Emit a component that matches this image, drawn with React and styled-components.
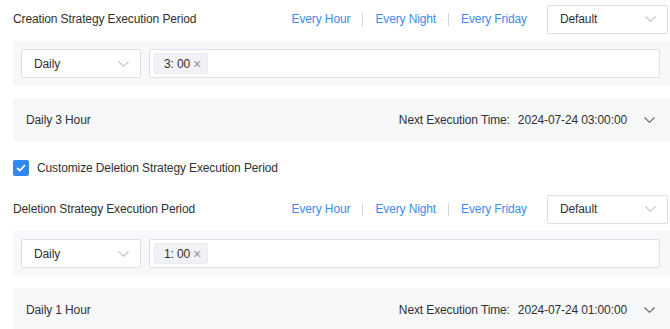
import React from "react";
import styled, { createGlobalStyle } from "styled-components";

const GlobalStyle = createGlobalStyle`
  body {
    margin: 0;
    background: #ffffff;
    font-family: "Liberation Sans", Arial, sans-serif;
    font-size: 12px;
    letter-spacing: -0.12px;
    color: #303133;
  }
`;

const Page = styled.div`
  width: 670px;
  box-sizing: border-box;
  padding: 1px 0 0 13px;
  overflow: hidden;
`;

const Header = styled.div`
  height: 36px;
  display: flex;
  align-items: center;
  padding-right: 2px;
  margin-top: ${(p) => p.$mt || 0}px;
`;

const Title = styled.div`
  flex: 1;
  color: #303133;
`;

const Links = styled.div`
  display: flex;
  align-items: center;
  margin-right: 20px;
`;

const LinkItem = styled.span`
  color: #3d8af7;
  cursor: pointer;
`;

const Sep = styled.span`
  width: 1px;
  height: 13px;
  background: #d4d7de;
  margin: 0 12px;
`;

const SelectBox = styled.div`
  box-sizing: border-box;
  width: ${(p) => p.$w}px;
  height: 29px;
  border: 1px solid #dcdfe6;
  border-radius: 2px;
  background: #fff;
  display: flex;
  align-items: center;
  justify-content: space-between;
  padding: 0 11px 0 12px;
  color: #303133;
  flex-shrink: 0;
`;

const Panel = styled.div`
  margin-top: 4px;
  background: #f7f8fa;
  padding: 8px 10px 8px 8px;
  display: flex;
  gap: 8px;
`;

const TagInput = styled.div`
  flex: 1;
  box-sizing: border-box;
  height: 29px;
  border: 1px solid #dcdfe6;
  border-radius: 2px;
  background: #fff;
  display: flex;
  align-items: center;
  padding-left: 4px;
`;

const Tag = styled.span`
  display: inline-flex;
  align-items: center;
  gap: 3px;
  height: 21px;
  box-sizing: border-box;
  padding: 0 6px 0 9px;
  background: #f0f2f5;
  border: 1px solid #e9ebef;
  border-radius: 2px;
  color: #303133;
`;

const TagClose = styled.span`
  color: #909399;
  font-size: 14px;
  line-height: 1;
`;

const Summary = styled.div`
  margin-top: 12px;
  height: 43px;
  background: #f7f8fa;
  display: flex;
  align-items: center;
  justify-content: space-between;
  padding: 0 15px 0 13px;
  color: #303133;
`;

const NextInfo = styled.div`
  display: flex;
  align-items: center;
`;

const DateText = styled.span`
  margin-left: 8px;
`;

const ChevronWrap = styled.span`
  display: inline-flex;
  margin-left: ${(p) => p.$ml || 0}px;
`;

const CheckRow = styled.label`
  margin-top: 19px;
  height: 16px;
  display: flex;
  align-items: center;
  gap: 8px;
  color: #303133;
`;

const CheckBox = styled.span`
  width: 16px;
  height: 16px;
  border-radius: 2px;
  background: #2f88f0;
  display: inline-flex;
  align-items: center;
  justify-content: center;
`;

const Chevron = ({ color = "#c0c4cc", ml }) => (
  <ChevronWrap $ml={ml}>
    <svg width="11" height="6" viewBox="0 0 11 6">
      <path d="M0.5 0.5 L5.5 5.3 L10.5 0.5" fill="none" stroke={color} strokeWidth="1.1" />
    </svg>
  </ChevronWrap>
);

const Section = ({ title, mt, time, summary, next }) => (
  <>
    <Header $mt={mt}>
      <Title>{title}</Title>
      <Links>
        <LinkItem>Every Hour</LinkItem>
        <Sep />
        <LinkItem>Every Night</LinkItem>
        <Sep />
        <LinkItem>Every Friday</LinkItem>
      </Links>
      <SelectBox $w={121}>
        <span>Default</span>
        <Chevron />
      </SelectBox>
    </Header>
    <Panel>
      <SelectBox $w={120}>
        <span>Daily</span>
        <Chevron />
      </SelectBox>
      <TagInput>
        <Tag>
          {time}
          <TagClose>×</TagClose>
        </Tag>
      </TagInput>
    </Panel>
    <Summary>
      <span>{summary}</span>
      <NextInfo>
        <span>Next Execution Time:</span>
        <DateText>{next}</DateText>
        <Chevron color="#606266" ml={17} />
      </NextInfo>
    </Summary>
  </>
);

export default function App() {
  return (
    <>
      <GlobalStyle />
      <Page>
        <Section
          title="Creation Strategy Execution Period"
          time="3: 00"
          summary="Daily 3 Hour"
          next="2024-07-24 03:00:00"
        />
        <CheckRow>
          <CheckBox>
            <svg width="10" height="8" viewBox="0 0 10 8">
              <path d="M1 4 L3.8 6.6 L9 1.2" fill="none" stroke="#fff" strokeWidth="1.8" />
            </svg>
          </CheckBox>
          <span>Customize Deletion Strategy Execution Period</span>
        </CheckRow>
        <Section
          mt={15}
          title="Deletion Strategy Execution Period"
          time="1: 00"
          summary="Daily 1 Hour"
          next="2024-07-24 01:00:00"
        />
      </Page>
    </>
  );
}
